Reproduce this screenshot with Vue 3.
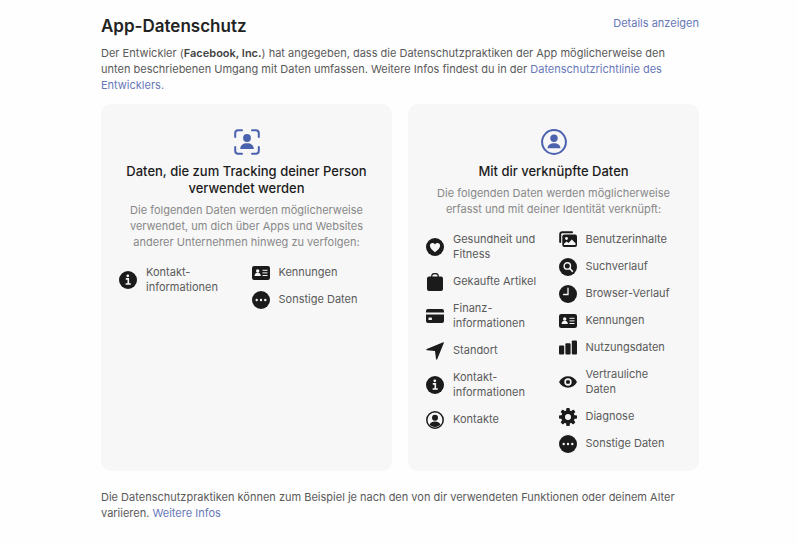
<script setup>
const cards = [
  {
    id: 'tracking',
    icon: 'scan',
    title: 'Daten, die zum Tracking deiner Person verwendet werden',
    text: 'Die folgenden Daten werden möglicherweise verwendet, um dich über Apps und Websites anderer Unternehmen hinweg zu verfolgen:',
    columns: [
      [{ icon: 'info', label: 'Kontakt-informationen' }],
      [
        { icon: 'idcard', label: 'Kennungen' },
        { icon: 'dots', label: 'Sonstige Daten' },
      ],
    ],
  },
  {
    id: 'linked',
    icon: 'person',
    title: 'Mit dir verknüpfte Daten',
    text: 'Die folgenden Daten werden möglicherweise erfasst und mit deiner Identität verknüpft:',
    columns: [
      [
        { icon: 'heart', label: 'Gesundheit und Fitness' },
        { icon: 'bag', label: 'Gekaufte Artikel' },
        { icon: 'credit', label: 'Finanz-informationen' },
        { icon: 'location', label: 'Standort' },
        { icon: 'info', label: 'Kontakt-informationen' },
        { icon: 'contact', label: 'Kontakte' },
      ],
      [
        { icon: 'photos', label: 'Benutzerinhalte' },
        { icon: 'search', label: 'Suchverlauf' },
        { icon: 'clock', label: 'Browser-Verlauf' },
        { icon: 'idcard', label: 'Kennungen' },
        { icon: 'bars', label: 'Nutzungsdaten' },
        { icon: 'eye', label: 'Vertrauliche Daten' },
        { icon: 'gear', label: 'Diagnose' },
        { icon: 'dots', label: 'Sonstige Daten' },
      ],
    ],
  },
]
const teeth = [0, 45, 90, 135, 180, 225, 270, 315]
</script>

<template>
  <svg class="sprite" aria-hidden="true">
    <symbol id="scan" viewBox="0 0 26 26">
      <path d="M1.200 8V4.200a3 3 0 0 1 3-3H8M18 1.200h3.800a3 3 0 0 1 3 3V8M24.800 18v3.800a3 3 0 0 1-3 3H18M8 24.800H4.200a3 3 0 0 1-3-3V18" fill="none" stroke="currentColor" stroke-width="2" stroke-linecap="round" />
      <circle cx="13" cy="9" r="3.900" fill="currentColor" />
      <path d="M6.200 20c0-3.900 3-5.800 6.800-5.800s6.800 1.900 6.800 5.800z" fill="currentColor" />
    </symbol>
    <symbol id="person" viewBox="0 0 26 26">
      <circle cx="13" cy="13" r="11.900" fill="none" stroke="currentColor" stroke-width="2" />
      <circle cx="13" cy="9.300" r="3.700" fill="currentColor" />
      <path d="M6.600 19.300c0-3.400 2.900-5 6.400-5s6.400 1.600 6.400 5z" fill="currentColor" />
    </symbol>
    <symbol id="contact" viewBox="0 0 18 18">
      <circle cx="9" cy="9" r="8.200" fill="none" stroke="currentColor" stroke-width="1.500" />
      <circle cx="9" cy="6.700" r="3" fill="currentColor" />
      <path d="M3.500 13.600c1-2.300 3-3.200 5.500-3.200s4.500.9 5.500 3.200C13.200 15 11.300 15.900 9 15.900S4.800 15 3.500 13.600z" fill="currentColor" />
    </symbol>
    <symbol id="info" viewBox="0 0 18 18">
      <circle cx="9" cy="9" r="9" fill="currentColor" />
      <circle cx="8.800" cy="4.800" r="1.400" fill="#f7f7f7" />
      <path d="M6.800 7.900h2.500v5M6.600 13h5.200" fill="none" stroke="#f7f7f7" stroke-width="1.600" />
    </symbol>
    <symbol id="idcard" viewBox="0 0 18 18">
      <rect y="2" width="18" height="14" rx="2.200" fill="currentColor" />
      <circle cx="5.700" cy="7" r="1.700" fill="#f7f7f7" />
      <path d="M2.600 12c0-2.300 1.400-3.200 3.100-3.200S8.800 9.700 8.800 12z" fill="#f7f7f7" />
      <path d="M10.500 6.300h5M10.500 8.900h5M10.500 11.500h5" stroke="#f7f7f7" stroke-width="1" />
    </symbol>
    <symbol id="dots" viewBox="0 0 18 18">
      <circle cx="9" cy="9" r="9" fill="currentColor" />
      <g fill="#f7f7f7"><circle cx="4.700" cy="9" r="1.200" /><circle cx="9" cy="9" r="1.200" /><circle cx="13.300" cy="9" r="1.200" /></g>
    </symbol>
    <symbol id="heart" viewBox="0 0 18 18">
      <circle cx="9" cy="9" r="9" fill="currentColor" />
      <path d="M9 14.200C6 12.100 3.900 10 3.900 7.500 3.900 4.700 7.400 3.900 9 6.400 10.600 3.900 14.100 4.700 14.100 7.500 14.100 10 12 12.100 9 14.200z" fill="#f7f7f7" />
    </symbol>
    <symbol id="bag" viewBox="0 0 18 18">
      <rect x="1" y="3.500" width="16" height="14.500" rx="2" fill="currentColor" />
      <path d="M5.700 5V3.600a3.300 3 0 0 1 6.600 0V5" fill="none" stroke="currentColor" stroke-width="1.300" />
    </symbol>
    <symbol id="credit" viewBox="0 0 18 18">
      <path d="M0 5.500V4a2 2 0 0 1 2-2h14a2 2 0 0 1 2 2v1.500zM0 7.500h18V14a2 2 0 0 1-2 2H2a2 2 0 0 1-2-2z" fill="currentColor" />
      <rect x="2.500" y="10.500" width="3.400" height="2.600" rx=".5" fill="#f7f7f7" />
    </symbol>
    <symbol id="location" viewBox="0 0 18 18">
      <path d="M17.200.2c.6-.2.800.2.600.7L11.300 17.100c-.3.800-1.200.7-1.300-.1L9 9 1 8.200C.1 8.100 0 7.200.8 6.900z" fill="currentColor" />
    </symbol>
    <symbol id="photos" viewBox="0 0 18 18">
      <path d="M1.200 11V3.200a2 2 0 0 1 2-2H13" fill="none" stroke="currentColor" stroke-width="2" stroke-linecap="round" />
      <rect x="3.300" y="3.500" width="14.700" height="12.500" rx="2" fill="currentColor" />
      <circle cx="7.500" cy="7.500" r="1.400" fill="#f7f7f7" />
      <path d="M5 14v-1.300l2.600-2.300 1.900 1.500 3.300-3.500 3.700 3.800V14z" fill="#f7f7f7" />
    </symbol>
    <symbol id="search" viewBox="0 0 18 18">
      <circle cx="9" cy="9" r="9" fill="currentColor" />
      <circle cx="8.300" cy="7.900" r="3.200" fill="none" stroke="#f7f7f7" stroke-width="1.400" />
      <path d="m10.700 10.400 2.700 2.900" stroke="#f7f7f7" stroke-width="1.600" stroke-linecap="round" />
    </symbol>
    <symbol id="clock" viewBox="0 0 18 18">
      <circle cx="9" cy="9" r="9" fill="currentColor" />
      <path d="M9 3.200V9.500H4.500" fill="none" stroke="#f7f7f7" stroke-width="1.300" stroke-linecap="round" />
    </symbol>
    <symbol id="bars" viewBox="0 0 18 18">
      <g fill="currentColor"><rect y="6.500" width="5.200" height="9" rx="1" /><rect x="6.400" y="4.200" width="5.200" height="11.300" rx="1" /><rect x="12.800" y="1.500" width="5.200" height="14" rx="1" /></g>
    </symbol>
    <symbol id="eye" viewBox="0 0 18 18">
      <path d="M0 9c2-3.700 5.300-5.700 9-5.700S16 5.300 18 9c-2 3.700-5.300 5.700-9 5.700S2 12.700 0 9z" fill="currentColor" />
      <circle cx="9" cy="9" r="2.900" fill="none" stroke="#f7f7f7" stroke-width="1.600" />
    </symbol>
    <symbol id="gear" viewBox="0 0 18 18">
      <circle cx="9" cy="9" r="4.900" fill="none" stroke="currentColor" stroke-width="3.800" />
      <rect v-for="a in teeth" :key="a" x="7.200" y="0" width="3.600" height="4" rx="1" fill="currentColor" :transform="`rotate(${a} 9 9)`" />
    </symbol>
  </svg>

  <main class="privacy">
    <header class="head">
      <h1>App-Datenschutz</h1>
      <a href="#details">Details anzeigen</a>
    </header>
    <p class="intro">
      Der Entwickler (<strong>Facebook, Inc.</strong>) hat angegeben, dass die Datenschutzpraktiken der App möglicherweise den unten beschriebenen Umgang mit Daten umfassen. Weitere Infos findest du in der <a href="#richtlinie">Datenschutzrichtlinie des Entwicklers.</a>
    </p>
    <div class="cards">
      <section v-for="card in cards" :key="card.id" class="card">
        <svg class="card-icon" aria-hidden="true"><use :href="`#${card.icon}`" /></svg>
        <h2>{{ card.title }}</h2>
        <p>{{ card.text }}</p>
        <div class="columns">
          <ul v-for="(items, i) in card.columns" :key="i">
            <li v-for="item in items" :key="item.label">
              <svg class="icon" aria-hidden="true"><use :href="`#${item.icon}`" /></svg>
              <span>{{ item.label }}</span>
            </li>
          </ul>
        </div>
      </section>
    </div>
    <p class="note">
      Die Datenschutzpraktiken können zum Beispiel je nach den von dir verwendeten Funktionen oder deinem Alter variieren. <a href="#infos">Weitere Infos</a>
    </p>
  </main>
</template>

<style>
body {
  background: #fefefe;
}
</style>

<style scoped>
.sprite {
  position: absolute;
  width: 0;
  height: 0;
}
.privacy {
  padding: 15px 98px 16px 101px;
  font: 11px/16px Inter, "Liberation Sans", sans-serif;
  color: #5a5a5a;
}
a {
  color: #6878b8;
  text-decoration: none;
}
.head {
  display: flex;
  justify-content: space-between;
  align-items: flex-start;
}
h1 {
  margin: 0;
  font-size: 17px;
  line-height: 22px;
  font-weight: 600;
  color: #222;
}
strong {
  font-weight: 600;
  color: #444;
}
.intro {
  margin: 8px 0 11px;
  padding-right: 20px;
}
.cards {
  display: grid;
  grid-template-columns: 1fr 1fr;
  gap: 16px;
}
.card {
  padding: 25px 18px 20px;
  border-radius: 10px;
  background: #f7f7f7;
  text-align: center;
}
.card-icon {
  display: block;
  width: 26px;
  height: 26px;
  margin: 0 auto 8px;
  color: #4b62ae;
}
h2 {
  margin: 0 0 5px;
  font-size: 13px;
  line-height: 17px;
  font-weight: 500;
  color: #1c1c1c;
}
.card p {
  margin: 0 8px 15px;
  color: #888;
}
.columns {
  display: grid;
  grid-template-columns: 1fr 1fr;
  gap: 10px;
  text-align: left;
  line-height: 15px;
}
ul {
  display: flex;
  flex-direction: column;
  gap: 12px;
  margin: 0;
  padding: 0;
  list-style: none;
}
li {
  display: flex;
  align-items: center;
  gap: 9px;
  padding-right: 6px;
}
.icon {
  flex: none;
  width: 18px;
  height: 18px;
  margin: -2px 0;
  color: #1b1b1c;
}
.note {
  margin: 18px 0 0;
}
@media (max-width: 700px) {
  .privacy {
    padding: 16px;
  }
}
@media (max-width: 560px) {
  .cards {
    grid-template-columns: 1fr;
  }
}
</style>
